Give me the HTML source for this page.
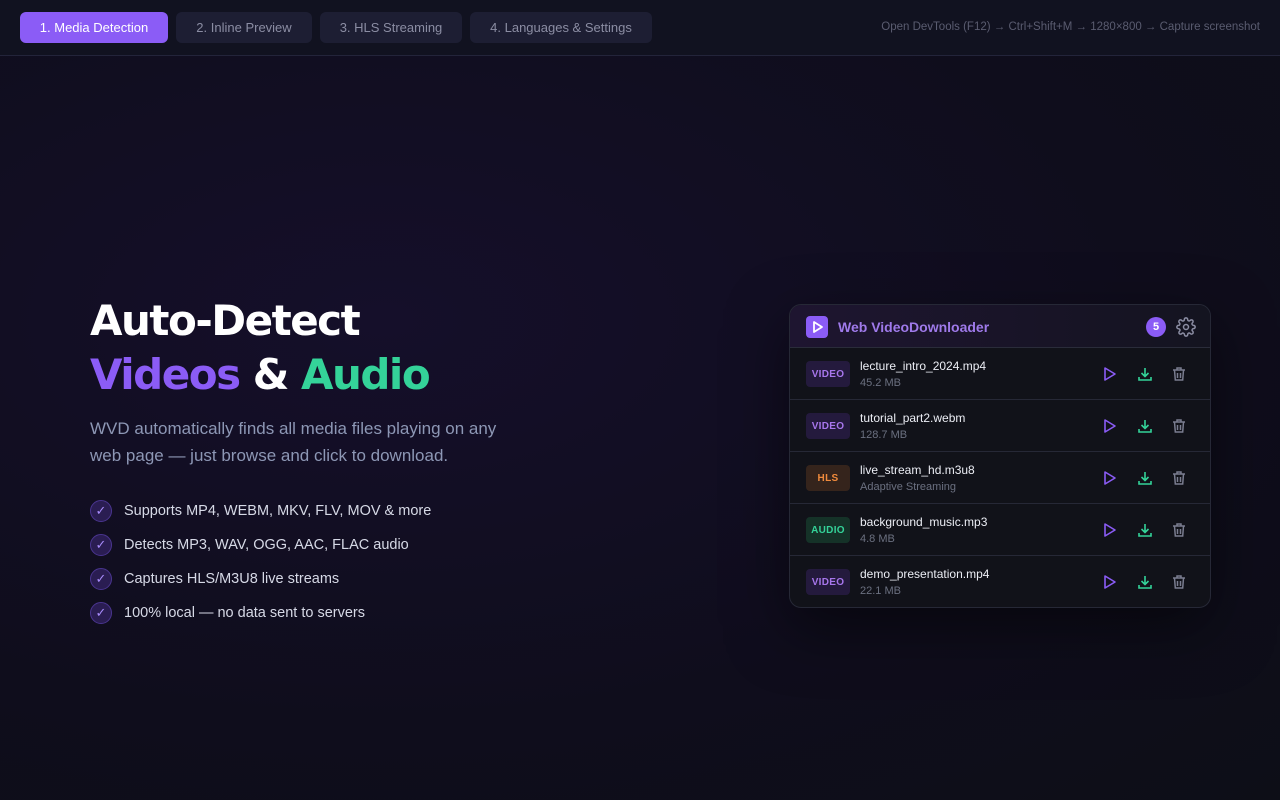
<!DOCTYPE html>
<html><head><meta charset="utf-8"><style>
*{margin:0;padding:0;box-sizing:border-box}
body{width:1280px;height:800px;overflow:hidden;font-family:"Liberation Sans",sans-serif;background:radial-gradient(ellipse at 30% 40%,#150f2a 0%,#0f0d1c 60%,#0d0e17 100%);color:#e5e7eb;position:relative}
.top{position:absolute;left:0;top:0;width:1280px;height:56px;background:#111220;border-bottom:1px solid #23243a}
.tab{position:absolute;top:12px;height:31px;border-radius:6px;background:#1d1e33;color:#8b8da3;font-size:13px;line-height:31px;text-align:center}
.tab.on{background:#8b5cf6;color:#fff}
.hint{position:absolute;right:20px;top:21px;font-size:11.5px;color:#5a5c70}
h1{position:absolute;left:90px;top:294px;font-size:42px;line-height:54px;font-weight:900;color:#fff;font-family:"DejaVu Sans","Liberation Sans",sans-serif;letter-spacing:-1.5px}
.p{position:absolute;left:90px;top:415px;width:430px;font-size:17px;line-height:27px;color:#8d97b5}
.li{position:absolute;left:90px;font-size:14.5px;color:#d6d9e6;height:22px;line-height:22px}
.li i{display:inline-flex;align-items:center;justify-content:center;width:22px;height:22px;border-radius:50%;background:#2a1d52;border:1px solid #4a3590;color:#a78bfa;font-style:normal;font-size:13px;margin-right:12px;vertical-align:top}
.card{position:absolute;left:789px;top:304px;width:422px;height:304px;border-radius:12px;background:#111219;border:1px solid #262836;box-shadow:0 20px 60px rgba(0,0,0,.5);overflow:hidden}
.hd{height:43px;border-bottom:1px solid #2a2c3a;background:linear-gradient(90deg,#1e1530,#141420);position:relative}
.logo{position:absolute;left:16px;top:11px;width:22px;height:22px;border-radius:4px;background:#8b5cf6}
.ttl{position:absolute;left:48px;top:14px;font-size:14px;font-weight:bold;color:#9f7aea}
.badge{position:absolute;left:356px;top:12px;width:20px;height:20px;border-radius:50%;background:#8b5cf6;color:#fff;font-size:11px;font-weight:bold;display:flex;align-items:center;justify-content:center}
.row{height:52px;border-bottom:1px solid #262836;position:relative}
.row:last-child{border-bottom:none}
.tag{position:absolute;left:16px;top:13px;width:44px;height:26px;border-radius:4px;font-size:10px;font-weight:bold;display:flex;align-items:center;justify-content:center;letter-spacing:.3px}
.v{background:#241a3d;color:#a776ec}.h{background:#35241c;color:#f08a3c}.a{background:#153228;color:#34d399}
.nm{position:absolute;left:70px;top:11px;font-size:12px;color:#eceef5}
.sz{position:absolute;left:70px;top:29px;font-size:11px;color:#6b7080}
.ic{position:absolute;top:17px}
</style></head><body>
<div class="top">
<div class="tab on" style="left:20px;width:148px">1. Media Detection</div>
<div class="tab" style="left:176px;width:136px">2. Inline Preview</div>
<div class="tab" style="left:320px;width:142px">3. HLS Streaming</div>
<div class="tab" style="left:470px;width:182px">4. Languages &amp; Settings</div>
<div class="hint">Open DevTools (F12) → Ctrl+Shift+M → 1280×800 → Capture screenshot</div>
</div>
<h1>Auto-Detect<br><span style="color:#8b5cf6">Videos</span> &amp; <span style="color:#34d399">Audio</span></h1>
<div class="p">WVD automatically finds all media files playing on any web page — just browse and click to download.</div>
<div class="li" style="top:500px"><i>✓</i>Supports MP4, WEBM, MKV, FLV, MOV &amp; more</div>
<div class="li" style="top:534px"><i>✓</i>Detects MP3, WAV, OGG, AAC, FLAC audio</div>
<div class="li" style="top:568px"><i>✓</i>Captures HLS/M3U8 live streams</div>
<div class="li" style="top:602px"><i>✓</i>100% local — no data sent to servers</div>
<div class="card">
<div class="hd"><div class="logo"><svg width="22" height="22" viewBox="0 0 22 22"><path d="M8 6l8 5-8 5z" fill="none" stroke="#fff" stroke-width="1.8" stroke-linejoin="round"/></svg></div>
<div class="ttl">Web VideoDownloader</div><div class="badge">5</div>
<svg style="position:absolute;left:386px;top:12px" width="20" height="20" viewBox="0 0 24 24" fill="none" stroke="#8b8da3" stroke-width="1.8"><circle cx="12" cy="12" r="3"/><path d="M19.4 15a1.7 1.7 0 0 0 .3 1.8l.1.1a2 2 0 1 1-2.8 2.8l-.1-.1a1.7 1.7 0 0 0-1.8-.3 1.7 1.7 0 0 0-1 1.5V21a2 2 0 1 1-4 0v-.1a1.7 1.7 0 0 0-1.1-1.5 1.7 1.7 0 0 0-1.8.3l-.1.1a2 2 0 1 1-2.8-2.8l.1-.1a1.7 1.7 0 0 0 .3-1.8 1.7 1.7 0 0 0-1.500-1H3a2 2 0 1 1 0-4h.1a1.7 1.7 0 0 0 1.5-1.1 1.7 1.7 0 0 0-.3-1.8l-.1-.1a2 2 0 1 1 2.8-2.8l.1.1a1.7 1.7 0 0 0 1.8.3H9a1.7 1.7 0 0 0 1-1.5V3a2 2 0 1 1 4 0v.1a1.7 1.7 0 0 0 1 1.5 1.7 1.7 0 0 0 1.8-.3l.1-.1a2 2 0 1 1 2.8 2.8l-.1.1a1.7 1.7 0 0 0-.3 1.8V9a1.7 1.7 0 0 0 1.5 1H21a2 2 0 1 1 0 4h-.1a1.7 1.7 0 0 0-1.5 1z"/></svg>
</div>
<div class="row"><div class="tag v">VIDEO</div><div class="nm">lecture_intro_2024.mp4</div><div class="sz">45.2 MB</div>
<svg class="ic" style="left:312px" width="16" height="18" viewBox="0 0 16 18"><path d="M3 3l10 6-10 6z" fill="none" stroke="#8b5cf6" stroke-width="1.6" stroke-linejoin="round"/></svg>
<svg class="ic" style="left:347px" width="16" height="18" viewBox="0 0 16 18"><path d="M8 3v8M4.5 8l3.5 3.5L11.5 8M2 12v3h12v-3" fill="none" stroke="#34d399" stroke-width="1.6"/></svg>
<svg class="ic" style="left:381px" width="16" height="18" viewBox="0 0 16 18"><path d="M2 5h12M6 5V3h4v2M3.5 5l.8 10h7.4l.8-10M6.5 8v5M9.5 8v5" fill="none" stroke="#7a7d90" stroke-width="1.5"/></svg></div>
<div class="row"><div class="tag v">VIDEO</div><div class="nm">tutorial_part2.webm</div><div class="sz">128.7 MB</div>
<svg class="ic" style="left:312px" width="16" height="18" viewBox="0 0 16 18"><path d="M3 3l10 6-10 6z" fill="none" stroke="#8b5cf6" stroke-width="1.6" stroke-linejoin="round"/></svg>
<svg class="ic" style="left:347px" width="16" height="18" viewBox="0 0 16 18"><path d="M8 3v8M4.5 8l3.5 3.5L11.5 8M2 12v3h12v-3" fill="none" stroke="#34d399" stroke-width="1.6"/></svg>
<svg class="ic" style="left:381px" width="16" height="18" viewBox="0 0 16 18"><path d="M2 5h12M6 5V3h4v2M3.5 5l.8 10h7.4l.8-10M6.5 8v5M9.5 8v5" fill="none" stroke="#7a7d90" stroke-width="1.5"/></svg></div>
<div class="row"><div class="tag h">HLS</div><div class="nm">live_stream_hd.m3u8</div><div class="sz">Adaptive Streaming</div>
<svg class="ic" style="left:312px" width="16" height="18" viewBox="0 0 16 18"><path d="M3 3l10 6-10 6z" fill="none" stroke="#8b5cf6" stroke-width="1.6" stroke-linejoin="round"/></svg>
<svg class="ic" style="left:347px" width="16" height="18" viewBox="0 0 16 18"><path d="M8 3v8M4.5 8l3.5 3.5L11.5 8M2 12v3h12v-3" fill="none" stroke="#34d399" stroke-width="1.6"/></svg>
<svg class="ic" style="left:381px" width="16" height="18" viewBox="0 0 16 18"><path d="M2 5h12M6 5V3h4v2M3.5 5l.8 10h7.4l.8-10M6.5 8v5M9.5 8v5" fill="none" stroke="#7a7d90" stroke-width="1.5"/></svg></div>
<div class="row"><div class="tag a">AUDIO</div><div class="nm">background_music.mp3</div><div class="sz">4.8 MB</div>
<svg class="ic" style="left:312px" width="16" height="18" viewBox="0 0 16 18"><path d="M3 3l10 6-10 6z" fill="none" stroke="#8b5cf6" stroke-width="1.6" stroke-linejoin="round"/></svg>
<svg class="ic" style="left:347px" width="16" height="18" viewBox="0 0 16 18"><path d="M8 3v8M4.5 8l3.5 3.5L11.5 8M2 12v3h12v-3" fill="none" stroke="#34d399" stroke-width="1.6"/></svg>
<svg class="ic" style="left:381px" width="16" height="18" viewBox="0 0 16 18"><path d="M2 5h12M6 5V3h4v2M3.5 5l.8 10h7.4l.8-10M6.5 8v5M9.5 8v5" fill="none" stroke="#7a7d90" stroke-width="1.5"/></svg></div>
<div class="row"><div class="tag v">VIDEO</div><div class="nm">demo_presentation.mp4</div><div class="sz">22.1 MB</div>
<svg class="ic" style="left:312px" width="16" height="18" viewBox="0 0 16 18"><path d="M3 3l10 6-10 6z" fill="none" stroke="#8b5cf6" stroke-width="1.6" stroke-linejoin="round"/></svg>
<svg class="ic" style="left:347px" width="16" height="18" viewBox="0 0 16 18"><path d="M8 3v8M4.5 8l3.5 3.5L11.5 8M2 12v3h12v-3" fill="none" stroke="#34d399" stroke-width="1.6"/></svg>
<svg class="ic" style="left:381px" width="16" height="18" viewBox="0 0 16 18"><path d="M2 5h12M6 5V3h4v2M3.5 5l.8 10h7.4l.8-10M6.5 8v5M9.5 8v5" fill="none" stroke="#7a7d90" stroke-width="1.5"/></svg></div>
</div>
</body></html>
